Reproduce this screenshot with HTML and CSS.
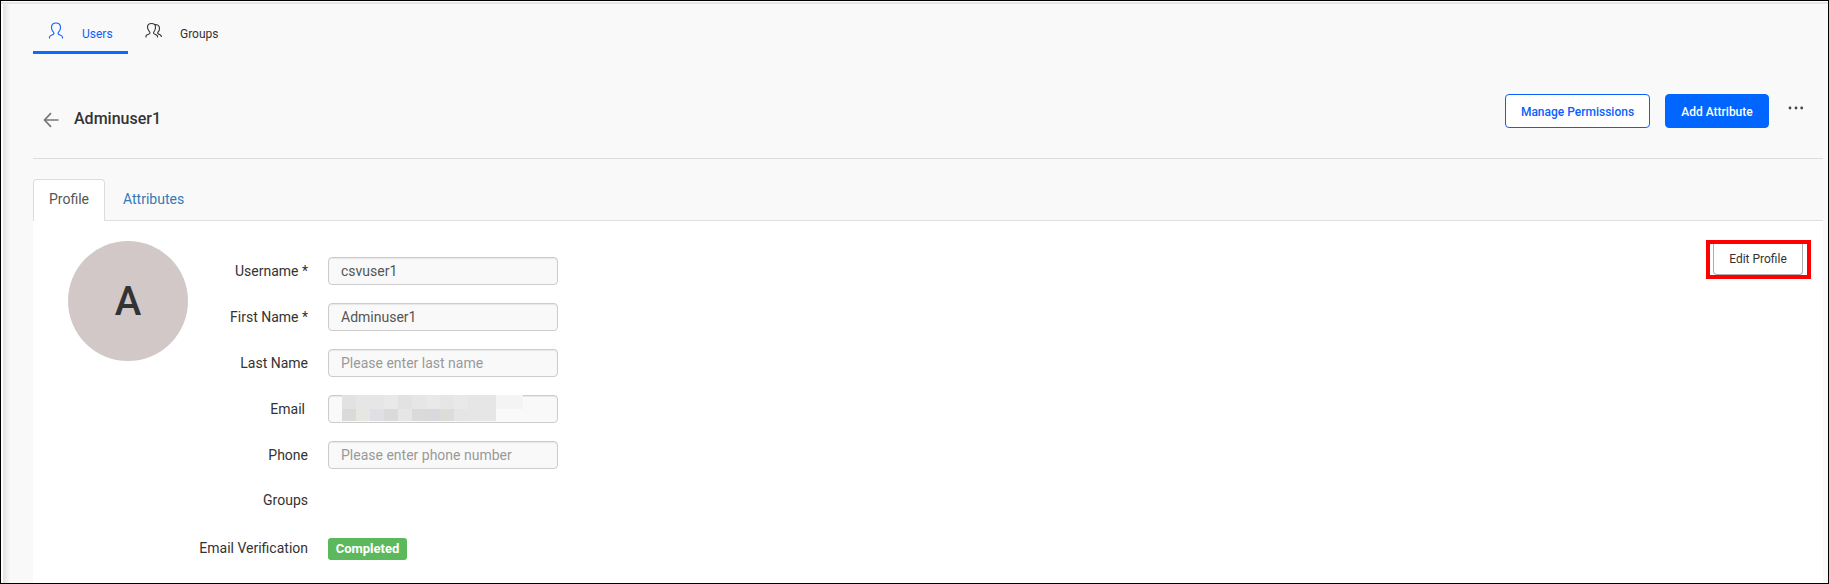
FILE: index.html
```html
<!DOCTYPE html>
<html lang="en">
<head>
<meta charset="utf-8">
<title>Users</title>
<link rel="stylesheet" href="styles.css">
</head>
<body>
<div class="frame">
  <main class="content">
    <nav class="main-nav">
      <a class="nav-item nav-item-active">
        <svg class="nav-icon" width="16" height="18" viewBox="0 0 16 18"><path d="M1.500 16.500V15Q1.700 14 3.500 13.300Q6 12.500 6 11.500Q6 10.700 5 9.500Q3.500 8 3.500 5.500Q3.500 1 8 1T12.500 5.500Q12.500 8 11 9.500Q10 10.700 10 11.500Q10 12.500 12.500 13.300Q14.300 14 14.500 15V16.500"/></svg>
        <span>Users</span>
      </a>
      <a class="nav-item">
        <svg class="nav-icon nav-icon-groups" width="18" height="18" viewBox="0 0 18 18"><path d="M1 15.500V14Q1.200 13.200 3 12.500Q5 11.700 5 11Q5 10.200 4 9Q2.500 7.500 2.500 5Q2.500 1.500 6.500 1.500T10.500 5Q10.500 7.500 9.500 9Q8.500 10.200 8.500 11Q8.500 11.700 10.500 12.500Q12 13.200 12.500 14V15.500M10 2.500Q14.500 2.500 14.500 6.500Q14.500 8.500 13.500 9.500Q12.500 10.500 12.700 11.200Q13 12 15 12.800Q16.300 13.500 16.500 15"/></svg>
        <span>Groups</span>
      </a>
    </nav>
    <header class="page-header">
      <svg class="back" width="16" height="16" viewBox="0 0 16 16"><path d="M8 1.200L1.500 8L8 14.800M1.500 8H15.500"/></svg>
      <h1 class="title">Adminuser1</h1>
      <div class="actions">
        <button class="btn btn-outline">Manage Permissions</button>
        <button class="btn btn-primary">Add Attribute</button>
        <svg class="more" width="16" height="4" viewBox="0 0 16 4"><circle cx="2" cy="2" r="1.400"/><circle cx="8" cy="2" r="1.400"/><circle cx="13.700" cy="2" r="1.400"/></svg>
      </div>
    </header>
    <div class="tabs">
      <a class="tab tab-active">Profile</a>
      <a class="tab">Attributes</a>
    </div>
    <section class="panel">
      <div class="avatar">A</div>
      <div class="form">
        <span class="label">Username *</span><input class="field" value="csvuser1" readonly>
        <span class="label">First Name *</span><input class="field" value="Adminuser1" readonly>
        <span class="label">Last Name</span><input class="field" placeholder="Please enter last name" readonly>
        <span class="label label-email">Email</span>
        <div class="field redacted">
          <svg class="mosaic" width="181" height="26" viewBox="0 0 181 26" shape-rendering="crispEdges">
            <path fill="#e6e6e7" d="M0 0h154v26H0z"/>
            <path fill="#f4f4f4" d="M154 0h27v14h-27z"/>
            <path fill="#e2e2e3" d="M0 0h14v14H0zM56 0h14v14H56z"/>
            <path fill="#e9e9e9" d="M42 0h14v14H42zM84 0h14v14H84zM112 0h14v14h-14z"/>
            <path fill="#d9dbda" d="M0 14h14v12H0z"/>
            <path fill="#e6e6e3" d="M14 14h14v12H14z"/>
            <path fill="#e0e0e4" d="M28 14h14v12H28z"/>
            <path fill="#dadada" d="M42 14h14v12H42zM70 14h14v12H70z"/>
            <path fill="#d8d9dc" d="M84 14h14v12H84z"/>
            <path fill="#dedbdb" d="M98 14h14v12H98z"/>
            <path fill="#e3e6e4" d="M112 14h14v12h-14z"/>
          </svg>
        </div>
        <span class="label">Phone</span><input class="field" placeholder="Please enter phone number" readonly>
        <span class="label">Groups</span><span></span>
        <span class="label">Email Verification</span><span class="badge">Completed</span>
      </div>
      <div class="highlight"><button class="edit">Edit Profile</button></div>
    </section>
  </main>
</div>
</body>
</html>
```
FILE: styles.css
```css
* { box-sizing: border-box; }
body { margin: 0; font-family: Roboto, sans-serif; font-size: 14px; color: #333; }
.frame {
  height: 584px;
  border: 1px solid #000;
  padding: 3px 5px 0 32px;
  overflow: hidden;
  background:
    linear-gradient(#fff 1px, #e9e4e8 1px, #e9e4e8 3px, transparent 3px),
    linear-gradient(90deg, #fff 2px, #e5e2e3 2px, #f9f9f9 9px);
}
.content { height: 579px; display: flex; flex-direction: column; }
.main-nav { display: flex; height: 50px; font-size: 12px; }
.nav-item { display: flex; align-items: flex-start; width: 95px; color: #333; }
.nav-item-active { color: #0b5fff; border-bottom: 3px solid #0b6aff; }
.nav-icon { margin: 18px 18px 0 15px; fill: none; stroke: currentColor; stroke-width: 1.100; }
.nav-item span { padding-top: 23px; line-height: 14px; }
.nav-icon-groups { margin: 18px 17px 0 17px; }
.page-header { height: 105px; display: flex; align-items: flex-start; border-bottom: 1px solid #ddd; }
.back { margin: 58px 0 0 10px; fill: none; stroke: #777; stroke-width: 1.700; }
.title { margin: 55px 0 0 15px; font-size: 16px; line-height: 20px; font-weight: 500; color: #333; }
.actions { display: flex; margin: 40px 19px 0 auto; }
.btn { height: 34px; padding: 2px 0 0; margin-right: 15px; border: 1px solid #0b5fff; border-radius: 4px; font: 500 12px Roboto, sans-serif; white-space: nowrap; background: #fff; color: #0b5fff; }
.btn-outline { width: 145px; }
.btn-primary { width: 104px; background: #06f; border-color: #06f; color: #fff; margin-right: 19px; }
.more { margin-top: 12px; fill: #444; }
.tabs { display: flex; height: 62px; padding-top: 20px; border-bottom: 1px solid #ddd; }
.tab { height: 42px; padding: 0 18px; line-height: 40px; color: #337ab7; }
.tab-active { width: 72px; padding: 0 15px; background: #fff; border: 1px solid #ddd; border-bottom: 0; border-radius: 4px 4px 0 0; color: #555; line-height: 38px; }
.panel { flex: 1; display: flex; align-items: flex-start; background: #fff; }
.avatar { width: 120px; height: 120px; margin: 20px 0 0 35px; border-radius: 50%; background: #d2c8c8; font-size: 40px; line-height: 121px; font-weight: 500; text-align: center; }
.form { display: grid; grid-template-columns: 120px 230px; grid-template-rows: repeat(5, 46px) 44px 52px; column-gap: 20px; align-items: center; margin-top: 27px; }
.label { text-align: right; }
.label-email { padding-right: 3px; }
.field { width: 230px; height: 28px; padding: 0 12px; border: 1px solid #ccc; border-radius: 4px; background: #f9f9f9; box-shadow: inset 0 1px 1px rgba(0, 0, 0, .075); color: #555; font: 14px Roboto, sans-serif; outline: 0; }
.field::placeholder { color: #999; opacity: 1; }
.redacted { padding: 0 13px; }
.mosaic { display: block; margin-top: -1px; }
.badge { justify-self: start; width: 79px; height: 22px; margin-top: 2px; border-radius: 3px; background: #5cb85c; color: #fff; font-size: 13px; font-weight: 700; line-height: 21px; text-align: center; }
.highlight { width: 105px; height: 39px; margin: 19px 12px 0 auto; border: 4px solid #f00; padding: 0 4px 0 3px; display: flex; }
.edit { flex: 1; height: 31px; border: 1px solid #adadad; border-top: 0; border-radius: 0 0 4px 4px; background: #fff; color: #333; font: 12px Roboto, sans-serif; padding: 0; }
```
